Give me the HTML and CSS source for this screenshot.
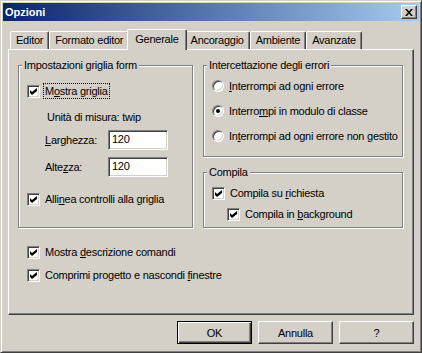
FILE: index.html
```html
<!DOCTYPE html>
<html lang="it">
<head>
  <meta charset="UTF-8" />
  <title>Opzioni</title>
  <link rel="stylesheet" href="styles.css">
</head>
<body>
  <div class="window">
    <div class="titlebar">
      <span class="title">Opzioni</span>
      <span class="close">
        <svg width="8" height="7" viewBox="0 0 8 7"><path d="M0 0h2l2 2.5L6 0h2L5 3.5 8 7H6L4 4.5 2 7H0l3-3.5z" fill="#000"/></svg>
      </span>
    </div>

    <div class="content">
      <div class="tabs">
        <div class="tab">Editor</div>
        <div class="tab">Formato editor</div>
        <div class="tab active">Generale</div>
        <div class="tab">Ancoraggio</div>
        <div class="tab">Ambiente</div>
        <div class="tab">Avanzate</div>
      </div>

      <div class="panel">
        <div class="columns">
          <div class="group grid-group">
            <div class="legend">Impostazioni griglia form</div>
            <label class="row check first">
              <span class="box"><svg width="7" height="7" viewBox="0 0 7 7"><path d="M0 2l2 2 5-4v3L2 7 0 5z" fill="#000"/></svg></span>
              <span class="text focus">M<u>o</u>stra griglia</span>
            </label>
            <div class="row units">Unità di misura: twip</div>
            <div class="row field width-row">
              <span class="field-label"><u>L</u>arghezza:</span>
              <span class="input">120</span>
            </div>
            <div class="row field height-row">
              <span class="field-label">Alte<u>z</u>za:</span>
              <span class="input">120</span>
            </div>
            <label class="row check align-row">
              <span class="box"><svg width="7" height="7" viewBox="0 0 7 7"><path d="M0 2l2 2 5-4v3L2 7 0 5z" fill="#000"/></svg></span>
              <span class="text">Alli<u>n</u>ea controlli alla griglia</span>
            </label>
          </div>

          <div class="right-col">
            <div class="group errors">
              <div class="legend">Intercettazione degli errori</div>
              <label class="row radio first">
                <span class="dot"></span>
                <span class="text"><u>I</u>nterrompi ad ogni errore</span>
              </label>
              <label class="row radio">
                <span class="dot on"></span>
                <span class="text">Interro<u>m</u>pi in modulo di classe</span>
              </label>
              <label class="row radio">
                <span class="dot"></span>
                <span class="text">In<u>t</u>errompi ad ogni errore non gestito</span>
              </label>
            </div>

            <div class="group compile">
              <div class="legend">Compila</div>
              <label class="row check first">
                <span class="box"><svg width="7" height="7" viewBox="0 0 7 7"><path d="M0 2l2 2 5-4v3L2 7 0 5z" fill="#000"/></svg></span>
                <span class="text">Compila su <u>r</u>ichiesta</span>
              </label>
              <label class="row check sub">
                <span class="box"><svg width="7" height="7" viewBox="0 0 7 7"><path d="M0 2l2 2 5-4v3L2 7 0 5z" fill="#000"/></svg></span>
                <span class="text">Compila in <u>b</u>ackground</span>
              </label>
            </div>
          </div>
        </div>

        <div class="panel-checks">
          <label class="row check first">
            <span class="box"><svg width="7" height="7" viewBox="0 0 7 7"><path d="M0 2l2 2 5-4v3L2 7 0 5z" fill="#000"/></svg></span>
            <span class="text">Mostra <u>d</u>escrizione comandi</span>
          </label>
          <label class="row check second">
            <span class="box"><svg width="7" height="7" viewBox="0 0 7 7"><path d="M0 2l2 2 5-4v3L2 7 0 5z" fill="#000"/></svg></span>
            <span class="text">Comprimi progetto e nascondi <u>f</u>inestre</span>
          </label>
        </div>
      </div>

      <div class="buttons">
        <div class="button default">OK</div>
        <div class="button">Annulla</div>
        <div class="button">?</div>
      </div>
    </div>
  </div>
</body>
</html>
```

FILE: styles.css
```css
body {
  margin: 0;
  font-family: "Liberation Sans", Arial, sans-serif;
  font-size: 11px;
  letter-spacing: -0.25px;
  color: #000;
  background: #d4d0c8;
}
u {
  text-decoration: underline;
  text-underline-offset: 1px;
}

/* window frame */
.window {
  width: 422px;
  height: 353px;
  box-sizing: border-box;
  background: #d4d0c8;
  border: 1px solid;
  border-color: #d4d0c8 #404040 #404040 #d4d0c8;
  box-shadow: inset 1px 1px #fff, inset -1px -1px #808080;
  padding: 2px;
}
.titlebar {
  height: 18px;
  display: flex;
  align-items: center;
  justify-content: space-between;
  padding: 0 2px 0 2px;
  background: linear-gradient(to right, #0a246a, #a6caf0);
}
.title {
  color: #fff;
  font-weight: bold;
  letter-spacing: 0;
}
.close {
  width: 16px;
  height: 14px;
  box-sizing: border-box;
  display: flex;
  align-items: center;
  justify-content: center;
  background: #d4d0c8;
  border: 1px solid;
  border-color: #fff #404040 #404040 #fff;
  box-shadow: inset -1px -1px #808080;
}

.content {
  padding: 0 5px;
}

/* tabs */
.tabs {
  display: flex;
  align-items: flex-end;
  height: 20px;
  margin-top: 8px;
  padding-left: 2px;
}
.tab {
  height: 18px;
  box-sizing: border-box;
  padding: 2px 5px 0;
  border: 1px solid;
  border-bottom: 0;
  border-color: #fff #404040 #fff #fff;
  border-radius: 2px 2px 0 0;
  box-shadow: inset -1px 0 #808080;
  white-space: nowrap;
}
.tab.active {
  height: 21px;
  margin: 0 -2px -1px;
  padding: 3px 7px 0;
  background: #d4d0c8;
  position: relative;
  z-index: 1;
}

.panel {
  height: 266px;
  box-sizing: border-box;
  border: 1px solid;
  border-color: #fff #404040 #404040 #fff;
  box-shadow: inset -1px -1px #808080;
  padding: 15px 0 0 9px;
}
.columns {
  display: flex;
  gap: 10px;
}

/* group boxes */
.group {
  box-sizing: border-box;
  border: 1px solid #808080;
  box-shadow: inset 1px 1px #fff, 1px 1px #fff;
  display: flex;
  flex-direction: column;
  align-items: flex-start;
  padding-left: 8px;
}
.legend {
  margin: -7px 0 0 -5px;
  padding: 0 2px;
  line-height: 13px;
  background: #d4d0c8;
}
.grid-group {
  width: 175px;
  height: 163px;
}
.right-col {
  width: 200px;
}
.errors {
  height: 92px;
}
.compile {
  height: 56px;
  margin-top: 15px;
}

/* rows */
.row {
  display: flex;
  align-items: center;
  height: 16px;
  white-space: nowrap;
}
.check .box {
  width: 13px;
  height: 13px;
  box-sizing: border-box;
  display: flex;
  align-items: center;
  justify-content: center;
  background: #fff;
  border: 1px solid;
  border-color: #808080 #fff #fff #808080;
  box-shadow: inset 1px 1px #404040, inset -1px -1px #d4d0c8;
}
.text {
  margin-left: 3px;
  padding: 0 1px;
  border: 1px solid transparent;
  line-height: 14px;
}
.text.focus {
  border: 1px dotted #000;
}
.radio .dot {
  width: 12px;
  height: 12px;
  box-sizing: border-box;
  border-radius: 50%;
  background: #fff;
  border: 1px solid;
  border-color: #808080 #fff #fff #808080;
  box-shadow: inset 1px 1px #404040, inset -1px -1px #d4d0c8;
  display: flex;
  align-items: center;
  justify-content: center;
}
.radio .dot.on::after {
  content: "";
  width: 4px;
  height: 4px;
  border-radius: 50%;
  background: #000;
}

.grid-group .first { margin-top: 11px; }
.units { margin: 10px 0 0 20px; }
.field { height: 20px; }
.width-row { margin-top: 5px; }
.height-row { margin-top: 7px; }
.field-label {
  width: 63px;
  margin-left: 18px;
}
.input {
  width: 60px;
  height: 20px;
  box-sizing: border-box;
  padding: 2px 0 0 3px;
  background: #fff;
  border: 1px solid;
  border-color: #808080 #fff #fff #808080;
  box-shadow: inset 1px 1px #404040, inset -1px -1px #d4d0c8;
}
.align-row { margin-top: 14px; }

.errors .first { margin-top: 6px; }
.errors .radio + .radio { margin-top: 9px; }
.compile .first { margin-top: 6px; }
.compile .sub {
  margin: 5px 0 0 15px;
}

.panel-checks {
  padding-left: 9px;
}
.panel-checks .first { margin-top: 16px; }
.panel-checks .second { margin-top: 7px; }

/* buttons */
.buttons {
  display: flex;
  justify-content: flex-end;
  gap: 6px;
  margin-top: 6px;
}
.button {
  width: 75px;
  height: 23px;
  box-sizing: border-box;
  display: flex;
  align-items: center;
  justify-content: center;
  border: 1px solid;
  border-color: #fff #404040 #404040 #fff;
  box-shadow: inset -1px -1px #808080;
}
.button.default {
  border-color: #000;
  box-shadow: inset 1px 1px #fff, inset -1px -1px #404040, inset -2px -2px #808080;
}
```
